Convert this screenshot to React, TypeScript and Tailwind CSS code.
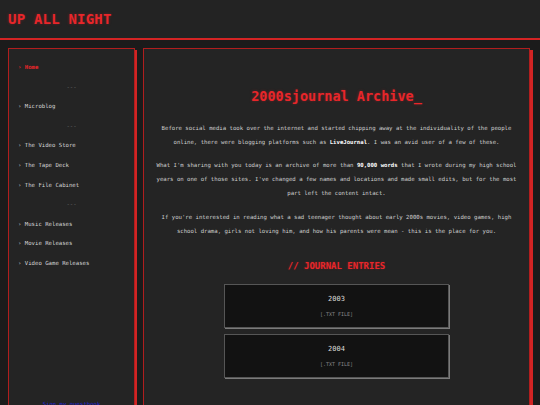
import React from "react";

const mono = { fontFamily: '"DejaVu Sans Mono", "Liberation Mono", monospace' };

function NavItem({ label, active }: { label: string; active?: boolean }) {
  return (
    <div className={`leading-[19.6px] text-[5.65px] whitespace-nowrap ${active ? "text-[#e8262a] font-bold" : "text-[#d6d6d6]"}`}>
      <span className={active ? "text-[#e8262a]" : "text-[#bdbdbd]"}>›</span> {label}
    </div>
  );
}

function Sep() {
  return <div className="leading-[19.6px] text-[5.65px] text-[#6a6a6a] text-center">---</div>;
}

function Entry({ year }: { year: string }) {
  return (
    <div className="w-[225px] h-[44px] mx-auto bg-[#121212] border border-[#565656] shadow-[1px_1px_0_#7a7a7a] flex flex-col items-center pt-[9px]">
      <div className="text-[7px] leading-[10px] text-[#dcdcdc]">{year}</div>
      <div className="text-[5px] leading-[8px] text-[#8a8a8a] mt-[6px]">[.TXT FILE]</div>
    </div>
  );
}

export default function App() {
  return (
    <div className="min-h-screen bg-[#1b1b1b]" style={mono}>
      <header className="h-[40px] bg-[#232323] border-b-2 border-[#d42424] flex items-center px-[8px]">
        <h1 className="text-[14px] font-bold text-[#e8262a] tracking-[0.2px] [text-shadow:0_0_3px_rgba(232,38,42,0.35)]">
          UP ALL NIGHT
        </h1>
      </header>
      <div className="flex gap-2 pl-[8px] pr-[10px] pt-[8px]">
        <aside className="w-[127px] shrink-0 bg-[#242424] border border-[#b01e1e] shadow-[2px_2px_0_#d22424] pl-[9px] pr-[9px] pt-[9px] flex flex-col">
          <NavItem label="Home" active />
          <Sep />
          <NavItem label="Microblog" />
          <Sep />
          <NavItem label="The Video Store" />
          <NavItem label="The Tape Deck" />
          <NavItem label="The File Cabinet" />
          <Sep />
          <NavItem label="Music Releases" />
          <NavItem label="Movie Releases" />
          <NavItem label="Video Game Releases" />
          <div className="mt-[125px] text-center text-[5.65px] leading-[10px] text-[#2424d8] underline">
            Sign my guestbook
          </div>
        </aside>
        <main className="flex-1 bg-[#242424] border border-[#b01e1e] shadow-[3px_2px_0_#d22424] px-[12px] pt-[37px] pb-[40px]">
          <h2 className="text-center text-[13.5px] leading-[20px] font-bold text-[#e8262a] [text-shadow:0_0_3px_rgba(232,38,42,0.35)]">
            2000sjournal Archive_
          </h2>
          <div className="text-center text-[5.65px] leading-[14px] text-[#d0d0d0] whitespace-nowrap">
            <p className="mt-[15px]">
              Before social media took over the internet and started chipping away at the individuality of the people
              <br />
              online, there were blogging platforms such as <b className="text-white">LiveJournal</b>. I was an avid user of a few of these.
            </p>
            <p className="mt-[9px]">
              What I'm sharing with you today is an archive of more than <b className="text-white">90,000 words</b> that I wrote during my high school
              <br />
              years on one of those sites. I've changed a few names and locations and made small edits, but for the most
              <br />
              part left the content intact.
            </p>
            <p className="mt-[10px]">
              If you're interested in reading what a sad teenager thought about early 2000s movies, video games, high
              <br />
              school drama, girls not loving him, and how his parents were mean - this is the place for you.
            </p>
          </div>
          <h3 className="mt-[21px] text-center text-[9px] leading-[14px] font-bold text-[#e8262a] [text-shadow:0_0_2px_rgba(232,38,42,0.35)]">
            // JOURNAL ENTRIES
          </h3>
          <div className="mt-[11px] flex flex-col gap-[6px]">
            <Entry year="2003" />
            <Entry year="2004" />
          </div>
        </main>
      </div>
    </div>
  );
}
